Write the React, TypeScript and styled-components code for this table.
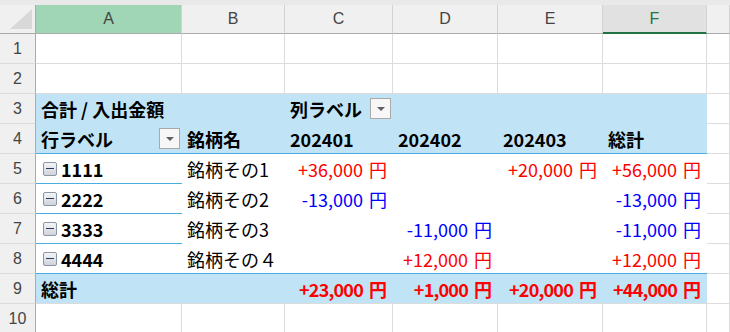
import React from 'react'
import styled, { createGlobalStyle } from 'styled-components'

const COLS = '36px 146px 103px 108px 105px 105px 104px 1fr'
const PIVOT_BG = '#c0e4f5'
const PIVOT_LINE = '#4aaee0'
const GRID = '#dcdcdc'
const RED = '#ff0000'
const BLUE = '#0000ff'

const GlobalStyles = createGlobalStyle`
  html, body {
    margin: 0;
    padding: 0;
    background: #ffffff;
    overflow: hidden;
  }
  body {
    font-family: "Noto Sans CJK JP", "Noto Sans", sans-serif;
  }
`

const Sheet = styled.div`
  width: 730px;
  height: 332px;
  overflow: hidden;
  background: #ffffff;
`

const TopStrip = styled.div`
  height: 5px;
  background: #e9e9e9;
`

const HeaderRow = styled.div`
  display: grid;
  grid-template-columns: ${COLS};
  height: 29px;
`

const ColHead = styled.div<{ $state?: 'selected' | 'active' }>`
  box-sizing: border-box;
  display: flex;
  align-items: center;
  justify-content: center;
  font-family: "Liberation Sans", "Noto Sans", sans-serif;
  font-size: 16px;
  color: ${p => (p.$state === 'active' ? '#217346' : '#444444')};
  background: ${p =>
    p.$state === 'selected' ? '#a0d6b6' : p.$state === 'active' ? '#e1e1e1' : '#f0f0f0'};
  border-right: 1px solid #d2d2d2;
  border-bottom: ${p => (p.$state === 'active' ? '2px solid #217346' : '1px solid #ababab')};
`

const Corner = styled.div`
  position: relative;
  box-sizing: border-box;
  background: #f0f0f0;
  border-right: 1px solid #ababab;
  border-bottom: 1px solid #ababab;
  &::after {
    content: '';
    position: absolute;
    right: 3px;
    bottom: 4px;
    width: 22px;
    height: 20px;
    background: #d8d8d8;
    clip-path: polygon(100% 0, 100% 100%, 0 100%);
  }
`

const Row = styled.div`
  display: grid;
  grid-template-columns: ${COLS};
  height: 30px;
`

const RowHead = styled.div`
  box-sizing: border-box;
  display: flex;
  align-items: center;
  justify-content: center;
  background: #f0f0f0;
  color: #444444;
  font-family: "Liberation Sans", "Noto Sans", sans-serif;
  font-size: 16px;
  border-right: 1px solid #ababab;
  border-bottom: 1px solid #dadada;
`

type Tone = 'plain' | 'head' | 'body' | 'total'

const Cell = styled.div<{
  $tone?: Tone
  $under?: boolean
  $right?: boolean
  $bold?: boolean
  $color?: string
}>`
  box-sizing: border-box;
  display: flex;
  align-items: center;
  justify-content: ${p => (p.$right ? 'flex-end' : 'space-between')};
  gap: 4px;
  padding: ${p => (p.$right ? '0 6px 0 2px' : '0 2px 0 5px')};
  white-space: nowrap;
  font-size: 18px;
  font-weight: ${p => (p.$bold ? 700 : 400)};
  color: ${p => p.$color ?? '#000000'};
  background: ${p => (p.$tone === 'head' || p.$tone === 'total' ? PIVOT_BG : '#ffffff')};
  border-right: ${p => (!p.$tone || p.$tone === 'plain' ? `1px solid ${GRID}` : 'none')};
  border-bottom: ${p =>
    p.$under
      ? `1px solid ${PIVOT_LINE}`
      : !p.$tone || p.$tone === 'plain' || p.$tone === 'total'
      ? `1px solid ${GRID}`
      : `1px solid transparent`};
`

const DropButton = styled.span`
  box-sizing: border-box;
  flex: none;
  display: inline-flex;
  align-items: center;
  justify-content: center;
  width: 21px;
  height: 21px;
  border: 1px solid #a9a9a9;
  background: #f7f7f7;
  &::before {
    content: '';
    border-left: 4px solid transparent;
    border-right: 4px solid transparent;
    border-top: 4px solid #606060;
  }
`

const Lead = styled.span`
  display: inline-flex;
  align-items: center;
  gap: 4px;
`

const Collapse = styled.span`
  box-sizing: border-box;
  flex: none;
  display: inline-flex;
  align-items: center;
  justify-content: center;
  margin-left: 2px;
  width: 14px;
  height: 14px;
  border: 1px solid #8b95a6;
  border-radius: 2px;
  background: linear-gradient(#f4f5f7, #cfd3da);
  &::before {
    content: '';
    width: 8px;
    height: 1px;
    background: #2b3a5a;
  }
`

const Label = styled.span``

const Amount = styled.span<{ $tight?: boolean }>`
  display: inline-flex;
  align-items: center;
  letter-spacing: ${p => (p.$tight ? '-0.8px' : '0')};
`

const Yen = styled.span`
  margin-left: 6px;
  letter-spacing: 0;
`

type Entry = { code: string; name: string; values: string[] }

const entries: Entry[] = [
  { code: '1111', name: '銘柄その1', values: ['+36,000', '', '+20,000', '+56,000'] },
  { code: '2222', name: '銘柄その2', values: ['-13,000', '', '', '-13,000'] },
  { code: '3333', name: '銘柄その3', values: ['', '-11,000', '', '-11,000'] },
  { code: '4444', name: '銘柄その４', values: ['', '+12,000', '', '+12,000'] },
]

const totals = ['+23,000', '+1,000', '+20,000', '+44,000']

const toneOf = (v: string) => (v.startsWith('-') ? BLUE : RED)

const Money = ({ value, tight }: { value: string; tight?: boolean }) =>
  value ? (
    <Amount $tight={tight}>
      {value}
      <Yen>円</Yen>
    </Amount>
  ) : null

const BlankRow = ({ n }: { n: number }) => (
  <Row>
    <RowHead>{n}</RowHead>
    {Array.from({ length: 7 }).map((_, i) => (
      <Cell key={i} />
    ))}
  </Row>
)

export default function App() {
  return (
    <Sheet>
      <GlobalStyles />
      <TopStrip />
      <HeaderRow>
        <Corner />
        <ColHead $state="selected">A</ColHead>
        <ColHead>B</ColHead>
        <ColHead>C</ColHead>
        <ColHead>D</ColHead>
        <ColHead>E</ColHead>
        <ColHead $state="active">F</ColHead>
        <ColHead />
      </HeaderRow>

      <BlankRow n={1} />
      <BlankRow n={2} />

      <Row>
        <RowHead>3</RowHead>
        <Cell $tone="head" $bold>
          <Label>合計 / 入出金額</Label>
        </Cell>
        <Cell $tone="head" />
        <Cell $tone="head" $bold>
          <Label>列ラベル</Label>
          <DropButton />
        </Cell>
        <Cell $tone="head" />
        <Cell $tone="head" />
        <Cell $tone="head" />
        <Cell />
      </Row>

      <Row>
        <RowHead>4</RowHead>
        <Cell $tone="head" $under $bold>
          <Label>行ラベル</Label>
          <DropButton />
        </Cell>
        <Cell $tone="head" $under $bold>
          <Label>銘柄名</Label>
        </Cell>
        <Cell $tone="head" $under $bold>
          <Label>202401</Label>
        </Cell>
        <Cell $tone="head" $under $bold>
          <Label>202402</Label>
        </Cell>
        <Cell $tone="head" $under $bold>
          <Label>202403</Label>
        </Cell>
        <Cell $tone="head" $under $bold>
          <Label>総計</Label>
        </Cell>
        <Cell />
      </Row>

      {entries.map((e, idx) => {
        const last = idx === entries.length - 1
        return (
          <Row key={e.code}>
            <RowHead>{5 + idx}</RowHead>
            <Cell $tone="body" $under $bold>
              <Lead>
                <Collapse />
                {e.code}
              </Lead>
            </Cell>
            <Cell $tone="body" $under={last}>
              <Label>{e.name}</Label>
            </Cell>
            {e.values.map((v, i) => (
              <Cell key={i} $tone="body" $under={last} $right $color={toneOf(v)}>
                <Money value={v} />
              </Cell>
            ))}
            <Cell />
          </Row>
        )
      })}

      <Row>
        <RowHead>9</RowHead>
        <Cell $tone="total" $bold>
          <Label>総計</Label>
        </Cell>
        <Cell $tone="total" />
        {totals.map((v, i) => (
          <Cell key={i} $tone="total" $right $bold $color={RED}>
            <Money value={v} tight />
          </Cell>
        ))}
        <Cell />
      </Row>

      <BlankRow n={10} />
    </Sheet>
  )
}
